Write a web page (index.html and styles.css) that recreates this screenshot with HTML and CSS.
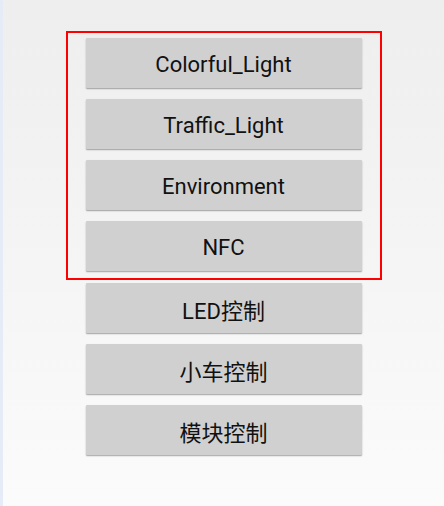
FILE: index.html
```html
<!DOCTYPE html>
<html>
<head>
<meta charset="utf-8">
<link rel="stylesheet" href="styles.css">
</head>
<body>
<div class="page">
  <div class="group">
    <button class="btn">Colorful_Light</button>
    <button class="btn">Traffic_Light</button>
    <button class="btn">Environment</button>
    <button class="btn">NFC</button>
  </div>
  <div class="list">
    <button class="btn">LED控制</button>
    <button class="btn">小车控制</button>
    <button class="btn">模块控制</button>
  </div>
</div>
</body>
</html>
```
FILE: styles.css
```css
html, body {
  margin: 0;
  padding: 0;
  height: 100%;
}
body {
  border-left: 3px solid #e6ecf7;
  background: linear-gradient(#eeeeee, #fbfbfb);
  font-family: Roboto, "Noto Sans CJK SC", sans-serif;
}
.page {
  display: flex;
  flex-direction: column;
  align-items: center;
  padding-top: 31px;
}
.group {
  width: 312px;
  border: 2px solid #ff0000;
  padding: 5px 0 7px;
  display: flex;
  flex-direction: column;
  align-items: center;
  gap: 11px;
}
.list {
  margin-top: 3px;
  display: flex;
  flex-direction: column;
  align-items: center;
  gap: 11px;
}
.btn {
  width: 276px;
  height: 50px;
  border: none;
  border-radius: 1px;
  background: #d0d0d0;
  box-shadow: 0 1px 1.5px rgba(0,0,0,0.35);
  font-family: Roboto, "Noto Sans CJK SC", sans-serif;
  font-size: 22px;
  color: #111111;
  padding: 2px 0 0;
}
```
